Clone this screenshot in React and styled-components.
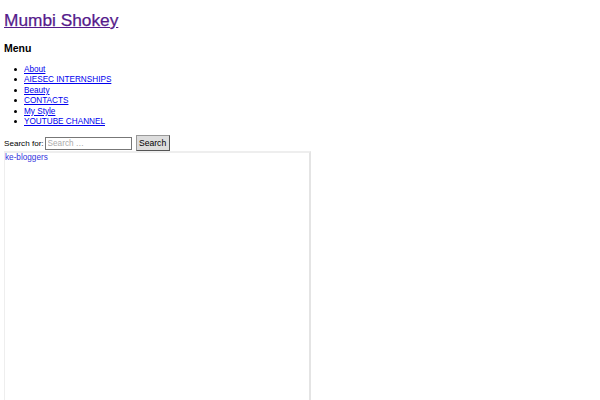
import React from 'react';
import styled, { createGlobalStyle } from 'styled-components';

const GlobalStyle = createGlobalStyle`
  html, body {
    margin: 0;
    background: #fff;
  }
  body {
    padding: 0 4px;
    font-family: "Liberation Sans", Arial, sans-serif;
    color: #000;
  }
`;

const menu = [
  'About',
  'AIESEC INTERNSHIPS',
  'Beauty',
  'CONTACTS',
  'My Style',
  'YOUTUBE CHANNEL',
];

const SiteTitle = styled.h1`
  margin: 0;
  padding-top: 10px;
  font-size: 17.3px;
  line-height: 20px;
  font-weight: normal;
  -webkit-text-stroke: 0.25px #551a8b;

  a {
    color: #551a8b;
  }
`;

const MenuTitle = styled.h3`
  margin: 12px 0 0;
  font-size: 10.5px;
  line-height: 13px;
  font-weight: bold;
`;

const MenuList = styled.ul`
  margin: 10px 0 0;
  padding-left: 20px;
  list-style: none;
  font-size: 8.2px;
  line-height: 10.4px;

  li::before {
    content: '';
    display: inline-block;
    width: 3px;
    height: 3px;
    border-radius: 50%;
    background: #000;
    margin-left: -10px;
    margin-right: 7px;
    vertical-align: 1px;
  }

  a {
    color: #0000ee;
  }
`;

const SearchForm = styled.form`
  display: flex;
  align-items: center;
  margin-top: 8px;
  height: 16px;
  font-size: 8.1px;
  font-weight: normal;
`;

const Label = styled.span`
  margin-right: 1px;
`;

const SearchInput = styled.input`
  box-sizing: border-box;
  width: 87px;
  height: 13px;
  padding: 0 2px;
  border: 1px solid #777;
  font-family: inherit;
  font-size: 8.2px;
  outline: none;

  &::placeholder {
    color: #aaa;
  }
`;

const SearchButton = styled.button`
  box-sizing: border-box;
  margin-left: 4px;
  height: 16px;
  width: 34px;
  padding: 0;
  background: #ddd;
  border: 1px solid #999;
  border-right-color: #555;
  border-bottom-color: #555;
  font-family: inherit;
  font-size: 8.6px;
  color: #000;
`;

const Frame = styled.div`
  box-sizing: border-box;
  width: 307px;
  height: 300px;
  border: 2px solid #eee;
  border-left-width: 1px;
  border-right-color: #e4e4e4;
  padding: 0;
  font-size: 8.2px;
  line-height: 10px;

  a {
    color: #3333dd;
    text-decoration: none;
  }
`;

export default function App() {
  return (
    <>
      <GlobalStyle />
      <SiteTitle>
        <a href="#">Mumbi Shokey</a>
      </SiteTitle>
      <MenuTitle>Menu</MenuTitle>
      <MenuList>
        {menu.map((item) => (
          <li key={item}>
            <a href="#">{item}</a>
          </li>
        ))}
      </MenuList>
      <SearchForm onSubmit={(e) => e.preventDefault()}>
        <Label>Search for:</Label>
        <SearchInput placeholder="Search …" />
        <SearchButton type="submit">Search</SearchButton>
      </SearchForm>
      <Frame>
        <a href="#">ke-bloggers</a>
      </Frame>
    </>
  );
}
